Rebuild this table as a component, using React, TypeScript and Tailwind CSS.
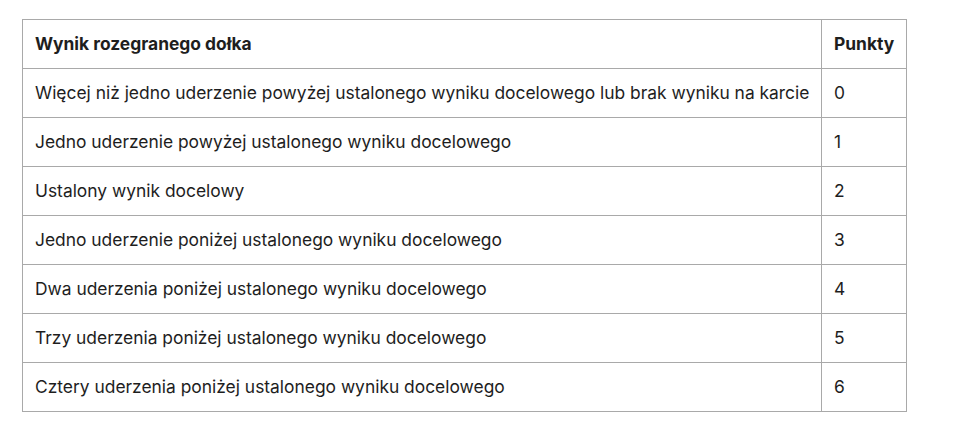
const rows: [string, string][] = [
  ['Więcej niż jedno uderzenie powyżej ustalonego wyniku docelowego lub brak wyniku na karcie', '0'],
  ['Jedno uderzenie powyżej ustalonego wyniku docelowego', '1'],
  ['Ustalony wynik docelowy', '2'],
  ['Jedno uderzenie poniżej ustalonego wyniku docelowego', '3'],
  ['Dwa uderzenia poniżej ustalonego wyniku docelowego', '4'],
  ['Trzy uderzenia poniżej ustalonego wyniku docelowego', '5'],
  ['Cztery uderzenia poniżej ustalonego wyniku docelowego', '6'],
];

export default function App() {
  return (
    <div className="min-h-screen bg-white pl-[22px] pt-[19px] font-['Inter',sans-serif] text-[17.4px] leading-6 text-[#1e1e1e]">
      <table className="w-[884px] table-fixed border-collapse">
        <colgroup>
          <col className="w-[799px]" />
          <col className="w-[85px]" />
        </colgroup>
        <thead>
          <tr>
            <th className="border border-[#a9a9a9] px-3 py-3 text-left font-bold">Wynik rozegranego dołka</th>
            <th className="border border-[#a9a9a9] px-3 py-3 text-left font-bold">Punkty</th>
          </tr>
        </thead>
        <tbody>
          {rows.map(([label, pts]) => (
            <tr key={pts}>
              <td className="border border-[#a9a9a9] px-3 py-3 whitespace-nowrap">{label}</td>
              <td className="border border-[#a9a9a9] px-3 py-3">{pts}</td>
            </tr>
          ))}
        </tbody>
      </table>
    </div>
  );
}
